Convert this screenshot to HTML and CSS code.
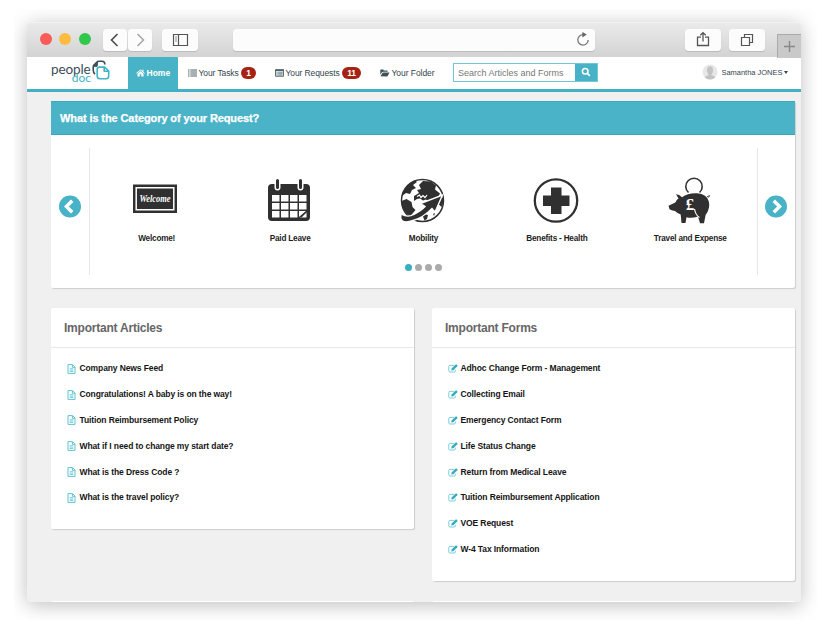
FILE: index.html
```html
<!DOCTYPE html>
<html lang="en">
<head>
<meta charset="utf-8">
<title>PeopleDoc</title>
<link rel="stylesheet" href="styles.css">
</head>
<body>
<svg class="defs" width="0" height="0">
  <symbol id="doc" viewBox="0 0 9 10"><path d="M1 .6h4.500L8 3.100v6.300H1zM5.400.8v2.500H8" fill="none" stroke="#5cc3d2" stroke-width="1"/><path d="M2.700 4.700h3.600M2.700 6.100h3.600M2.700 7.500h3.600" stroke="#5cc3d2" stroke-width=".8"/></symbol>
  <symbol id="edit" viewBox="0 0 10 9"><path d="M6 1.400H2Q.8 1.400.8 2.600v4.300Q.8 8 2 8h4.200q1.200 0 1.200-1.100V5.600" fill="none" stroke="#6ccad7" stroke-width=".9"/><path d="M3.300 6.600l.3-2.100L7.600.6q.5-.4 1 0l.7.700q.4.500 0 1L5.400 6.300z" fill="#38aabd"/></symbol>
</svg>
<div class="stage">
<div class="window">
  <header class="toolbar">
    <div class="lights"><i class="red"></i><i class="amber"></i><i class="green"></i></div>
    <div class="btn back"><svg width="24" height="22"><path d="M14.500 5L8.500 11l6 6" fill="none" stroke="#4a4a4a" stroke-width="1.600"/></svg></div>
    <div class="btn forward"><svg width="24" height="22"><path d="M9.500 5l6 6-6 6" fill="none" stroke="#a5a5a5" stroke-width="1.500"/></svg></div>
    <div class="btn sidebar"><svg width="36" height="22"><path d="M11.500 5.500h14v11h-14zM16.500 5.500v11" fill="none" stroke="#555" stroke-width="1.200"/><path d="M13 8h2M13 10h2M13 12h2" stroke="#777" stroke-width=".8"/></svg></div>
    <div class="btn address"><svg width="16" height="18" viewBox="0 0 16 18"><path d="M8 3.700A5.200 5.200 0 1 0 13.200 9" fill="none" stroke="#777" stroke-width="1.300"/><path d="M7.300 1l4.500 2.600-4.500 2.900z" fill="#666"/></svg></div>
    <div class="btn share"><svg width="36" height="22"><path d="M16 8.200h-3.500v8.300h11V8.200H20M18 12.500V4M15.300 6.300L18 3.600l2.700 2.700" fill="none" stroke="#555" stroke-width="1.300"/></svg></div>
    <div class="btn tabs"><svg width="36" height="22"><path d="M12.500 8.500h8v8h-8zM15.500 8.200V5.500h8v8h-2.700" fill="none" stroke="#555" stroke-width="1.200"/></svg></div>
    <div class="newtab"><svg width="22" height="22"><path d="M6 11.500h11M11.500 6v11" stroke="#888" stroke-width="1.400"/></svg></div>
  </header>
  <nav class="nav">
    <div class="logo">
      <div class="wordmark"><span class="people">people</span><span class="doc">doc</span></div>
      <svg class="mark" width="18" height="22" viewBox="0 0 18 22"><g fill="none" stroke-width="1.600" stroke-linejoin="round"><path d="M3 14.300Q1.200 12.500 1.200 9.800V7Q1.200 5.500 2.500 4.500L4.700 2.200Q5.500 1.300 7 1.300H10Q12.800 1.300 12.800 4V4.500" stroke="#3b4d57"/><path d="M1.500 6.600H4.100Q5.500 6.600 5.500 5V1.800z" fill="#3b4d57" stroke="#3b4d57" stroke-width=".8"/><path d="M7.200 7.100H12.600L16.700 11V16Q16.700 18.700 14 18.700H8Q5.200 18.700 5.200 16V9.300Q5.200 7.100 7.200 7.100M12.200 7.400V11.300H16.400" stroke="#42b3c5"/></g></svg>
    </div>
    <a class="home"><svg width="9" height="8" viewBox="0 0 9 8"><path d="M4.500.4L.3 4.100l.5.600L4.500 1.500l3.700 3.200.5-.6-1.200-1V.8H6.300V2z" fill="#fff"/><path d="M4.500 2.300l3 2.500v2.800H5.300V5.300H3.700v2.300H1.500V4.800z" fill="#fff"/></svg><b>Home</b></a>
    <a class="tasks"><svg width="9" height="8"><path d="M0 1h1.500M2.300 1H9M0 3h1.500M2.300 3H9M0 5h1.500M2.300 5H9M0 7h1.500M2.300 7H9" stroke="#53636a" stroke-width="1.200"/></svg><span>Your Tasks</span><em>1</em></a>
    <a class="requests"><svg width="9" height="8"><path d="M.5.700h8v6.600h-8z" fill="#dde5e7" stroke="#617177"/><path d="M0 1.200h9" stroke="#53636a" stroke-width="1.400"/><path d="M1.600 3.300h1M3.300 3.300h4.300M1.600 4.700h1M3.300 4.700h4.300M1.600 6h1M3.300 6h4.300" stroke="#617177" stroke-width=".7"/></svg><span>Your Requests</span><em>11</em></a>
    <a class="folder"><svg width="10" height="8"><path d="M.3 5.700V1.300Q.3.500 1 .5h2.200l.8 1h3q.7 0 .7.700v.5H3Q2.400 2.700 2 3.300z" fill="#3f5056"/><path d="M.5 7.300L2.500 3.900q.3-.5.900-.5h6.100L7.700 6.900q-.3.500-1 .5z" fill="#3f5056"/></svg><span>Your Folder</span></a>
    <div class="search"><span>Search Articles and Forms</span><div class="go"><svg width="10" height="10"><circle cx="4.200" cy="4.200" r="2.800" fill="none" stroke="#fff" stroke-width="1.500"/><path d="M6.200 6.200l2.600 2.600" stroke="#fff" stroke-width="1.700"/></svg></div></div>
    <div class="user"><svg width="16" height="16"><defs><clipPath id="av"><circle cx="8" cy="8" r="7.500"/></clipPath></defs><circle cx="8" cy="8" r="7.500" fill="#e7e7e7"/><g clip-path="url(#av)" fill="#c3c3c3"><ellipse cx="8" cy="6.200" rx="3" ry="3.900"/><path d="M6.500 9h3v2.300q4 .5 4.500 4.700H2q.5-4.200 4.500-4.700z"/></g></svg><span>Samantha JONES</span><i class="caret"></i></div>
  </nav>
  <main class="page">
    <section class="card category">
      <h1>What is the Category of your Request?</h1>
      <div class="carousel">
        <div class="arrow prev"><svg width="22" height="23" viewBox="0 0 22 22"><circle cx="11" cy="11" r="11" fill="#48b3c6"/><path d="M13.200 5.200L7.400 11l5.800 5.800" fill="none" stroke="#fff" stroke-width="3.400"/></svg></div>
        <div class="slides">
          <div class="items">
            <figure><svg class="shift" width="48" height="50" viewBox="0 0 48 50"><path d="M2 8.500h44v28.500H2z" fill="#303030"/><path d="M5.200 11.800h37.600v22H5.200z" fill="none" stroke="#fff" stroke-width="1.500"/><text x="24" y="26" text-anchor="middle" class="script" textLength="31" lengthAdjust="spacingAndGlyphs">Welcome</text></svg><figcaption>Welcome!</figcaption></figure>
            <figure><svg width="48" height="50" viewBox="0 0 48 50"><rect x="2" y="8" width="42" height="37" rx="4" fill="#303030"/><path d="M11.500 4v7.500M34.500 4v7.500" stroke="#fff" stroke-width="6" stroke-linecap="round"/><path d="M11.500 4.500v7M34.500 4.500v7" stroke="#303030" stroke-width="3" stroke-linecap="round"/><path d="M6 19h7.500v6.500H6zM15 19h7.500v6.500H15zM24 19h7.500v6.500H24zM33 19h7.500v6.500H33zM6 27h7.500v6.500H6zM15 27h7.500v6.500H15zM24 27h7.500v6.500H24zM33 27h7.500v6.500H33zM6 35h7.500v6.500H6zM15 35h7.500v6.500H15zM24 35h7.500v6.500H24zM33 35h7l-7 6z" fill="#fff"/><path d="M40.500 36v5.500H34z" fill="#fff"/><path d="M33.500 41l7-6v1.500l-5 5z" fill="#303030"/></svg><figcaption>Paid Leave</figcaption></figure>
            <figure><svg width="48" height="50" viewBox="0 0 48 50"><circle cx="23.500" cy="24.500" r="21" fill="#fff" stroke="#303030" stroke-width="1.500"/><path d="M4 16Q8 7 16 4.500L18 6l-4 3 3 3-4 2-2 4-4-1-4 3zM2.500 25l5-2 5 3 1 5 3 3-5 6Q3 36 2.500 25zM20 9l4-4 8 .5 5 4-1 4 5 4-2 4-8 5-4-3-3 1-3-2-3 .5-3 2v-5l5-3-2-3 4-1zM41 20l3 2q1 5-1.500 9l-3-3z" fill="#303030"/><path d="M18 20.500l2.500-1.500 1.500 2.500 2-2 2 2 2-2.500" fill="none" stroke="#fff" stroke-width="1.200"/><path d="M2 38Q9 42 14.500 38.500 22 35 26 30.500l-4.500-3 22-8.500-7.500 17-3-3.500Q24 42 14 44.500q-8 3-11 0Q1 42 2 38z" fill="#303030" stroke="#fff" stroke-width="1.400"/><path d="M24 40.500l3-2 2 .5-1 4-2.500 1.500zM34 38l2-1-1 3z" fill="#303030"/></svg><figcaption>Mobility</figcaption></figure>
            <figure><svg width="48" height="50" viewBox="0 0 48 50"><circle cx="23" cy="24.500" r="21.200" fill="none" stroke="#303030" stroke-width="2.300"/><path d="M18 11.500h10.500v8H36.500v10.500h-8v8H18v-8h-8V19.500h8z" fill="#303030"/></svg><figcaption>Benefits - Health</figcaption></figure>
            <figure><svg width="48" height="50" viewBox="0 0 48 50"><path d="M22.500 16.500a8.200 8.200 0 1 1 11 0" fill="none" stroke="#303030" stroke-width="1.600"/><path d="M2.500 29.800l6.800-3.300Q11 23 12.500 22.500L10 18.300q3.500 0 6 3 6-4.500 15-4Q41 18 42.800 25.500q1.700 7-3.200 13.500L38 47.300h-4L32 40.500q-6.500 2-11.500.7L19.500 47h-4l-.8-8.500Q11.500 37.500 9 35q-4-.5-5.500-1.800z" fill="#303030"/><path d="M41 20.500q3 1.500 2-1.500" fill="none" stroke="#303030"/><path d="M28.500 33q1 6 5 8.500" fill="none" stroke="#fff" stroke-width="1.200"/><text x="24" y="33.500" text-anchor="middle" class="pound">£</text></svg><figcaption>Travel and Expense</figcaption></figure>
          </div>
          <div class="dots"><i class="on"></i><i></i><i></i><i></i></div>
        </div>
        <div class="arrow next"><svg width="22" height="23" viewBox="0 0 22 22"><circle cx="11" cy="11" r="11" fill="#48b3c6"/><path d="M8.800 5.200l5.800 5.800-5.800 5.800" fill="none" stroke="#fff" stroke-width="3.400"/></svg></div>
      </div>
    </section>
    <div class="columns">
      <section class="card articles">
        <h2>Important Articles</h2>
        <ul>
          <li><svg><use href="#doc"/></svg><span>Company News Feed</span></li>
          <li><svg><use href="#doc"/></svg><span>Congratulations! A baby is on the way!</span></li>
          <li><svg><use href="#doc"/></svg><span>Tuition Reimbursement Policy</span></li>
          <li><svg><use href="#doc"/></svg><span>What if I need to change my start date?</span></li>
          <li><svg><use href="#doc"/></svg><span>What is the Dress Code ?</span></li>
          <li><svg><use href="#doc"/></svg><span>What is the travel policy?</span></li>
        </ul>
      </section>
      <section class="card forms">
        <h2>Important Forms</h2>
        <ul>
          <li><svg><use href="#edit"/></svg><span>Adhoc Change Form - Management</span></li>
          <li><svg><use href="#edit"/></svg><span>Collecting Email</span></li>
          <li><svg><use href="#edit"/></svg><span>Emergency Contact Form</span></li>
          <li><svg><use href="#edit"/></svg><span>Life Status Change</span></li>
          <li><svg><use href="#edit"/></svg><span>Return from Medical Leave</span></li>
          <li><svg><use href="#edit"/></svg><span>Tuition Reimbursement Application</span></li>
          <li><svg><use href="#edit"/></svg><span>VOE Request</span></li>
          <li><svg><use href="#edit"/></svg><span>W-4 Tax Information</span></li>
        </ul>
      </section>
    </div>
    <div class="columns upcoming"><section class="card"></section><section class="card"></section></div>
  </main>
</div>
</div>
</body>
</html>
```
FILE: styles.css
```css
* { box-sizing: border-box; }
body { margin: 0; background: #fff; font-family: "Liberation Sans", Arial, sans-serif; overflow: hidden; }
svg { display: block; flex: none; }
i, em { font-style: normal; }
h1, h2, ul, figure { margin: 0; padding: 0; }
.defs { display: block; height: 0; }
.stage { margin: 9px 0 0 14px; width: 803px; height: 611px; padding: 13px; overflow: hidden; }
.window { width: 774px; height: 580px; border-radius: 6px 6px 3px 3px; overflow: hidden; background: #f0f0f0; box-shadow: 0 3px 20px rgba(0,0,0,.26); }

.toolbar { display: flex; height: 35px; padding-top: 6px; background: linear-gradient(#eaeaea, #d3d3d3); border-top: 1px solid #f2f2f2; }
.lights { display: flex; gap: 7.300px; margin: 4px 0 0 13px; width: 63px; }
.lights i { width: 12px; height: 12px; border-radius: 50%; }
.red { background: #fc5b57; }
.amber { background: #fdbc40; }
.green { background: #2fc84b; }
.btn { height: 21.500px; border-radius: 3.500px; background: #fcfcfc; box-shadow: 0 1px 1px rgba(0,0,0,.14); }
.back { width: 24px; }
.forward { width: 24px; margin-left: 1.500px; }
.sidebar { width: 36px; margin-left: 10px; }
.address { display: flex; width: 364px; margin-left: 34.500px; padding: 2px 4px; justify-content: flex-end; }
.share { width: 36px; margin-left: 90px; }
.tabs { width: 36px; margin-left: 7.500px; }
.newtab { margin: 5px 0 0 12.500px; width: 24px; height: 24px; border: 1px solid #aaa; border-width: 1px 0 0 1px; background: #c9c9c9; }

.nav { display: flex; height: 35px; background: #fff; border-bottom: 3px solid #43b0c3; color: #35454c; font-size: 8.500px; }
.logo { display: flex; width: 101px; padding: 3px 0 0 24px; }
.wordmark { display: flex; flex-direction: column; width: 41px; padding-top: 3px; font-family: Lato, sans-serif; }
.people { height: 10px; font-size: 13.500px; color: #3b4d57; letter-spacing: -.1px; line-height: 12px; }
.doc { align-self: flex-end; height: 10px; margin-right: 1px; font-size: 12px; color: #42b3c5; line-height: 9px; }
.nav a { display: flex; align-items: center; height: 32px; padding-bottom: 1px; white-space: nowrap; }
.nav a svg { margin-right: 1.500px; }
.home { width: 50px; padding-left: 8px; background: #48b3c6; color: #fff; }
.tasks { margin-left: 10px; width: 87px; letter-spacing: -.1px; }
.requests { width: 105px; letter-spacing: -.1px; }
.folder { width: 73px; letter-spacing: -.05px; }
.nav em { margin-left: 2.500px; min-width: 15px; height: 12px; padding: 0 5px; border-radius: 6px; background: #a62214; color: #fff; font-weight: bold; line-height: 12px; text-align: center; }
.search { display: flex; width: 145px; height: 19px; margin-top: 5.500px; border: 1px solid #73c6d3; background: #fff; color: #777; font-size: 9px; line-height: 18px; white-space: nowrap; }
.search span { width: 121px; padding-left: 4px; }
.go { display: flex; align-items: center; justify-content: center; width: 22px; background: #48b3c6; }
.user { display: flex; align-items: center; height: 30px; margin-left: 103.500px; font-size: 7.500px; letter-spacing: -.03px; white-space: nowrap; }
.user span { margin-left: 4px; }
.caret { margin-left: 2px; border: 2px solid transparent; border-top: 3px solid #35454c; border-bottom: 0; }

.page { padding: 9px 6px 0 24px; }
.card { background: #fff; border-radius: 2px; box-shadow: 1px 1px 1px rgba(0,0,0,.15); }
.category { height: 187px; margin-bottom: 20px; width: 744px; }
h1 { height: 34px; padding-left: 9px; background: #4ab3c7; border: 1px solid #3ba9bd; border-width: 1px 0; color: #fff; font-size: 11px; letter-spacing: -.1px; line-height: 33px; -webkit-text-stroke: .25px #fff; }
.carousel { display: flex; padding-top: 13px; }
.arrow { display: flex; width: 38px; justify-content: center; padding-top: 47px; }
.next { width: 36px; }
.slides { width: 669px; height: 127px; border: 1px solid #e7e7e7; border-width: 0 1px; }
.items { display: grid; grid-template-columns: repeat(5, 1fr); padding-top: 28px; }
figure { display: flex; flex-direction: column; align-items: center; }
figure .shift { margin-left: -4px; }
figcaption { margin-top: 7px; color: #1d1d1d; font-size: 8.200px; font-weight: bold; letter-spacing: -.2px; line-height: 12px; white-space: nowrap; }
.script { fill: #fff; font-family: "Liberation Serif", serif; font-size: 10px; font-style: italic; font-weight: bold; }
.pound { fill: #fff; font-family: "Liberation Serif", serif; font-size: 17px; font-weight: bold; }
.dots { display: flex; justify-content: center; gap: 3.200px; margin-top: 19px; }
.dots i { width: 7px; height: 7px; border-radius: 50%; background: #aaa; }
.dots .on { background: #37aec1; }

.columns { display: flex; align-items: flex-start; gap: 18px; }
.columns .card { width: 363px; }
.articles { height: 221px; }
.forms { height: 273px; }
h2 { height: 40px; padding-left: 13px; border-bottom: 1px solid #e8e8e8; color: #666; font-size: 12px; letter-spacing: -.22px; line-height: 40px; }
ul { list-style: none; padding: 7.500px 0 0 16px; }
li { display: flex; align-items: center; height: 25.800px; color: #151515; font-size: 8.500px; font-weight: bold; letter-spacing: -.11px; white-space: nowrap; }
li svg { width: 9px; height: 10px; margin: 1px 3.500px 0 0; }
.forms li svg { width: 10px; height: 9px; margin-right: 2.500px; }
.upcoming { margin-top: 20px; }
.upcoming .card { height: 40px; }
```
